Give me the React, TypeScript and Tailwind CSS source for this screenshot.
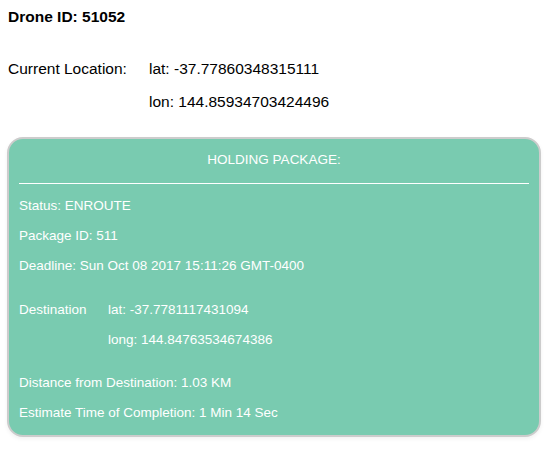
import React from 'react';

const font = { fontFamily: '"Liberation Sans", Arial, Helvetica, sans-serif' };

const Row = ({ children }: { children: React.ReactNode }) => (
  <div className="h-[30px] flex items-center">{children}</div>
);

const App = () => {
  return (
    <div className="min-h-[450px] bg-white text-black" style={font}>
      {/* Drone info */}
      <div className="pt-[8px] px-[8px]">
        <h1 className="text-[15.5px] leading-[18px] font-bold">Drone ID: 51052</h1>

        <div className="mt-[34px] flex text-[15.5px] leading-[18px]">
          <div className="w-[141px]">Current Location:</div>
          <div className="flex flex-col gap-[15px]">
            <span>lat: -37.77860348315111</span>
            <span>lon: 144.85934703424496</span>
          </div>
        </div>
      </div>

      {/* Package card */}
      <div className="mt-[26px] ml-[7px] w-[534px] rounded-[16px] border-2 border-[#cccccc] bg-[#79cbb0] text-white text-[13.5px] shadow-[0_2px_4px_rgba(0,0,0,0.06)]">
        <div className="pt-[6px] px-[10px] pb-[7px]">
          <div className="h-[30px] flex items-center justify-center">HOLDING PACKAGE:</div>
          <div className="mt-[8px] mb-[7px] h-px bg-white" />

          <Row>Status: ENROUTE</Row>
          <Row>Package ID: 511</Row>
          <Row>Deadline: Sun Oct 08 2017 15:11:26 GMT-0400</Row>

          <div className="mt-[14px] flex">
            <div className="w-[89px] h-[30px] flex items-center">Destination</div>
            <div className="flex flex-col">
              <Row>lat: -37.7781117431094</Row>
              <Row>long: 144.84763534674386</Row>
            </div>
          </div>

          <div className="mt-[13px]">
            <Row>Distance from Destination: 1.03 KM</Row>
            <Row>Estimate Time of Completion: 1 Min 14 Sec</Row>
          </div>
        </div>
      </div>
    </div>
  );
};

export default App;
